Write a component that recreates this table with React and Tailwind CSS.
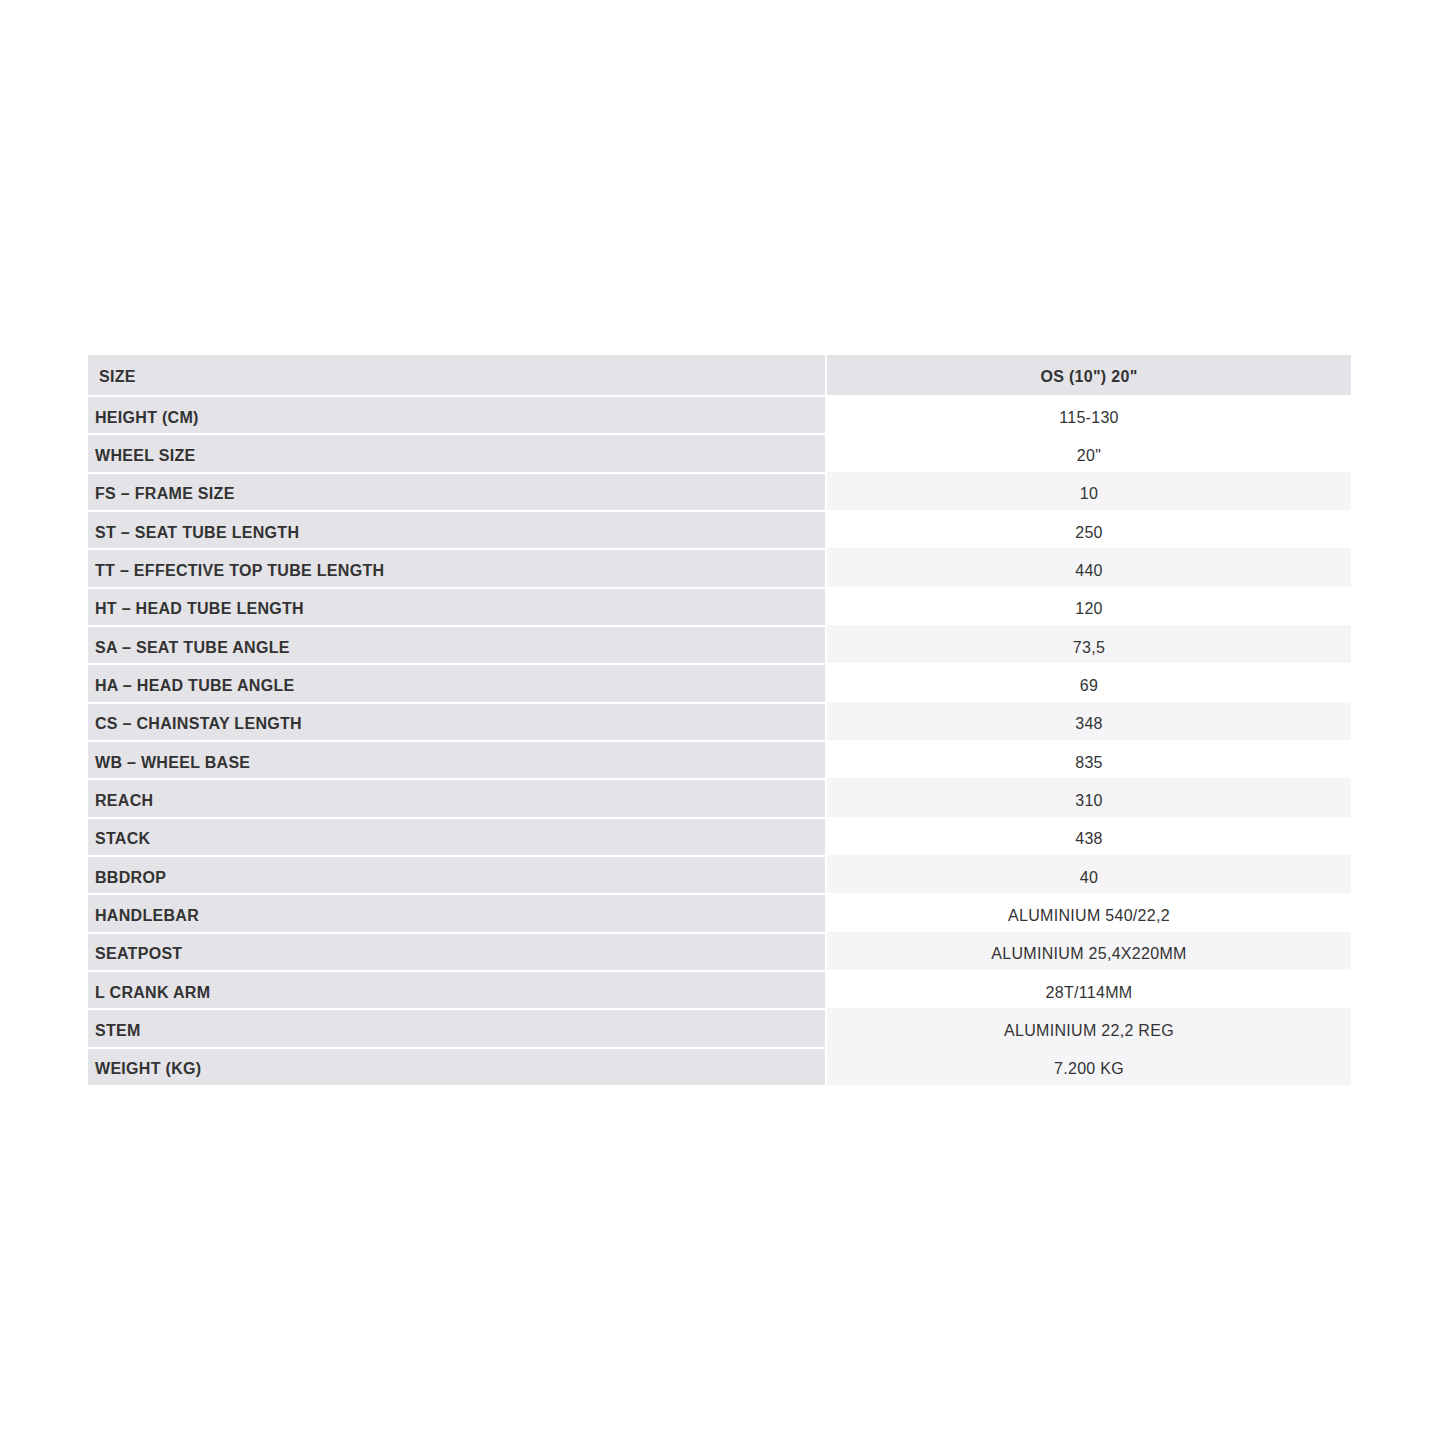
const rows = [
  ["HEIGHT (CM)", "115-130", false],
  ["WHEEL SIZE", "20\"", false],
  ["FS – FRAME SIZE", "10", true],
  ["ST – SEAT TUBE LENGTH", "250", false],
  ["TT – EFFECTIVE TOP TUBE LENGTH", "440", true],
  ["HT – HEAD TUBE LENGTH", "120", false],
  ["SA – SEAT TUBE ANGLE", "73,5", true],
  ["HA – HEAD TUBE ANGLE", "69", false],
  ["CS – CHAINSTAY LENGTH", "348", true],
  ["WB – WHEEL BASE", "835", false],
  ["REACH", "310", true],
  ["STACK", "438", false],
  ["BBDROP", "40", true],
  ["HANDLEBAR", "ALUMINIUM 540/22,2", false],
  ["SEATPOST", "ALUMINIUM 25,4X220MM", true],
  ["L CRANK ARM", "28T/114MM", false],
  ["STEM", "ALUMINIUM 22,2 REG", true],
  ["WEIGHT (KG)", "7.200 KG", true],
];

export default function App() {
  return (
    <div className="min-h-[1440px] w-[1440px] bg-white pt-[355px] text-[16px] tracking-[0.3px] text-[#333] font-['Liberation_Sans',Arial,sans-serif]">
      <div className="ml-[88px] w-[1263px]">
        <div className="flex h-[40px] font-bold">
          <div className="flex w-[737px] items-center bg-[#e4e3e8] pl-[11px] pt-[4px]">SIZE</div>
          <div className="ml-[2px] flex flex-1 items-center justify-center bg-[#e4e3e8] pt-[4px]">OS (10") 20"</div>
        </div>
        {rows.map(([label, value, shaded]) => (
          <div key={label} className="flex h-[38.33px]">
            <div className="flex w-[737px] items-center border-t-2 border-white bg-[#e4e3e8] pl-[7px] pt-[5px] font-bold">
              {label}
            </div>
            <div
              className={`ml-[2px] flex flex-1 items-center justify-center pt-[7px] ${
                shaded ? "bg-[#f5f5f7]" : "bg-white"
              }`}
            >
              {value}
            </div>
          </div>
        ))}
      </div>
    </div>
  );
}
